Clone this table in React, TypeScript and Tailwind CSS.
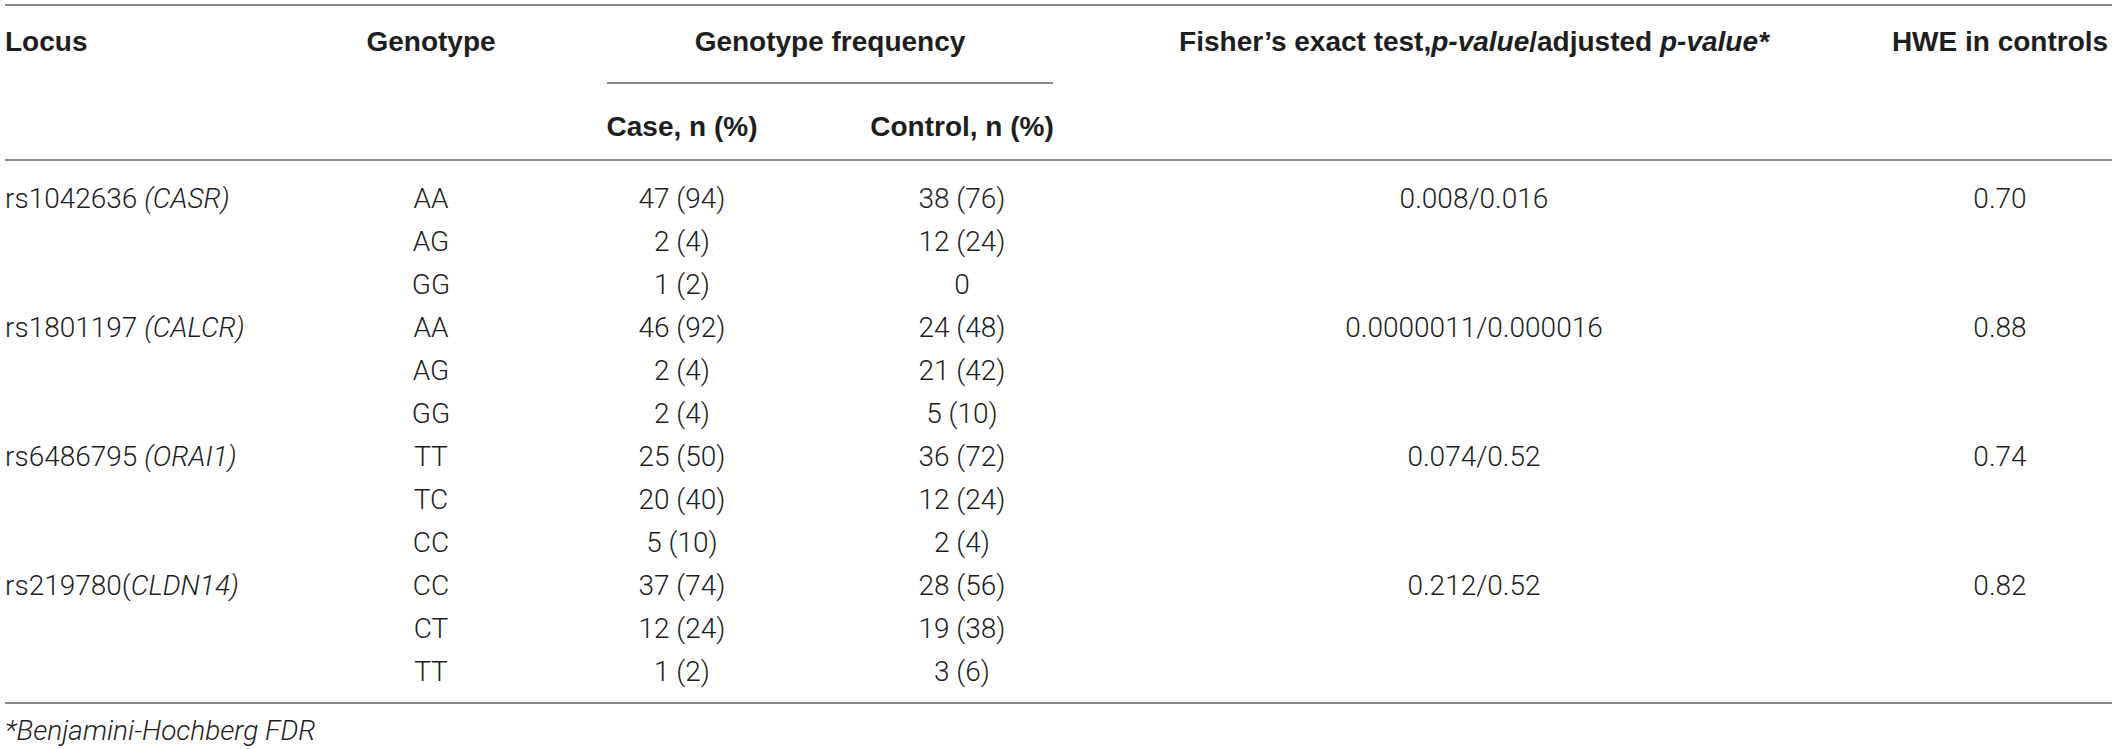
const rows = [
  { locus: "rs1042636 ", gene: "(CASR)", g: "AA", case: "47 (94)", ctrl: "38 (76)", p: "0.008/0.016", hwe: "0.70" },
  { g: "AG", case: "2 (4)", ctrl: "12 (24)" },
  { g: "GG", case: "1 (2)", ctrl: "0" },
  { locus: "rs1801197 ", gene: "(CALCR)", g: "AA", case: "46 (92)", ctrl: "24 (48)", p: "0.0000011/0.000016", hwe: "0.88" },
  { g: "AG", case: "2 (4)", ctrl: "21 (42)" },
  { g: "GG", case: "2 (4)", ctrl: "5 (10)" },
  { locus: "rs6486795 ", gene: "(ORAI1)", g: "TT", case: "25 (50)", ctrl: "36 (72)", p: "0.074/0.52", hwe: "0.74" },
  { g: "TC", case: "20 (40)", ctrl: "12 (24)" },
  { g: "CC", case: "5 (10)", ctrl: "2 (4)" },
  { locus: "rs219780(", gene: "CLDN14)", g: "CC", case: "37 (74)", ctrl: "28 (56)", p: "0.212/0.52", hwe: "0.82" },
  { g: "CT", case: "12 (24)", ctrl: "19 (38)" },
  { g: "TT", case: "1 (2)", ctrl: "3 (6)" },
];

const cols = "grid grid-cols-[357px_138px_364px_196px_828px_224px]";

export default function App() {
  return (
    <div className="w-[2117px] h-[749px] bg-white text-[#1e1e1e] text-[28px] leading-[36px] font-['Liberation_Sans',Arial,sans-serif]">
      <div className="ml-[5px] w-[2107px] pt-[4px]">
        <div className="h-[2px] bg-[#8c8c8c]" />

        {/* header */}
        <div className={cols + " font-bold"}>
          <div className="pt-[18px]">Locus</div>
          <div className="pt-[18px] text-center">Genotype</div>
          <div className="col-span-2 pt-[18px]">
            <div className="ml-[107px] mr-[7px] text-center">Genotype frequency</div>
            <div className="ml-[107px] mr-[7px] mt-[22px] h-[2px] bg-[#8c8c8c]" />
            <div className="grid grid-cols-[364px_196px] pt-[25px] pb-[14px]">
              <div className="text-center whitespace-nowrap">Case, n (%)</div>
              <div className="text-center whitespace-nowrap">Control, n (%)</div>
            </div>
          </div>
          <div className="pt-[18px] text-center whitespace-nowrap">
            Fisher’s exact test,<i>p-value</i>/adjusted <i>p-value*</i>
          </div>
          <div className="pt-[18px] text-center whitespace-nowrap">HWE in controls</div>
        </div>

        <div className="h-[2px] bg-[#8c8c8c]" />

        {/* body, light weight like the printed table */}
        <div className="pt-[16px] pb-[9px] font-['Roboto','Liberation_Sans',sans-serif] font-light">
          {rows.map((r, i) => (
            <div key={"row" + i} className={cols + " h-[43px] items-center whitespace-nowrap"}>
              <div>
                {r.locus}
                <i>{r.gene}</i>
              </div>
              <div className="text-center">{r.g}</div>
              <div className="text-center">{r.case}</div>
              <div className="text-center">{r.ctrl}</div>
              <div className="text-center">{r.p}</div>
              <div className="text-center">{r.hwe}</div>
            </div>
          ))}
        </div>

        <div className="h-[2px] bg-[#8c8c8c]" />
        <div className="pt-[9px] italic font-['Roboto','Liberation_Sans',sans-serif] font-light">
          *Benjamini-Hochberg FDR
        </div>
      </div>
    </div>
  );
}
